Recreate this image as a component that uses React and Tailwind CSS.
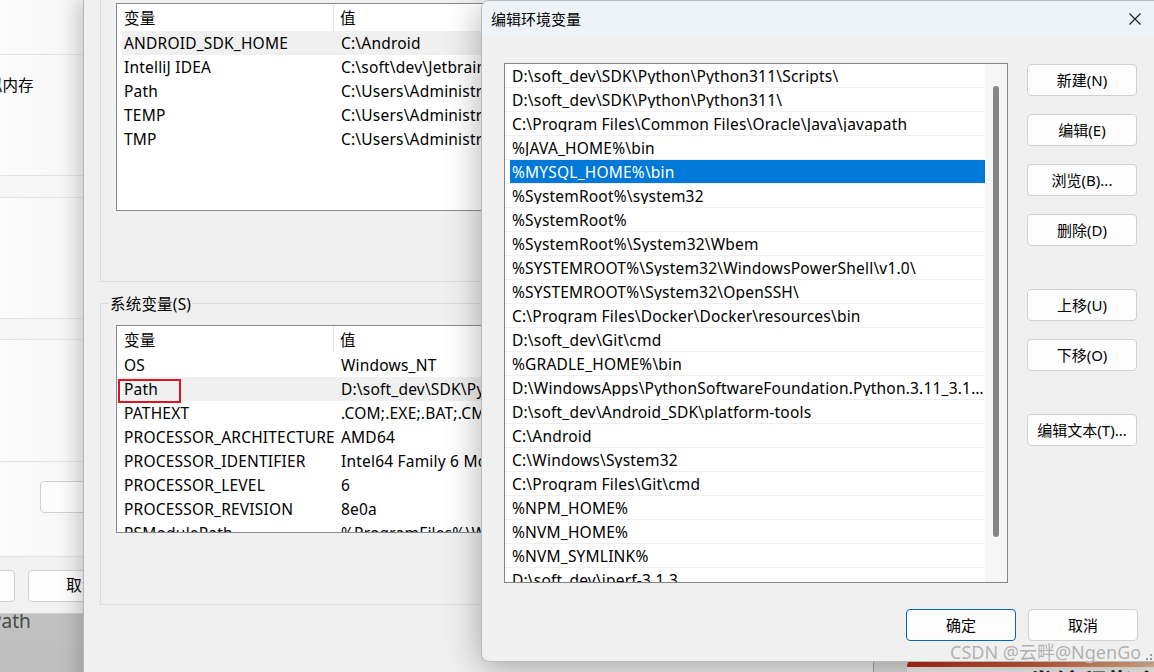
import React from "react";

const userVars = [
  ["ANDROID_SDK_HOME", "C:\\Android"],
  ["IntelliJ IDEA", "C:\\soft\\dev\\Jetbrains\\IntelliJ IDEA 2023.1\\bin;"],
  ["Path", "C:\\Users\\Administrator\\AppData\\Local\\Microsoft\\WindowsApps;"],
  ["TEMP", "C:\\Users\\Administrator\\AppData\\Local\\Temp"],
  ["TMP", "C:\\Users\\Administrator\\AppData\\Local\\Temp"],
];

const sysVars = [
  ["OS", "Windows_NT"],
  ["Path", "D:\\soft_dev\\SDK\\Python\\Python311\\Scripts\\;D:\\soft_dev"],
  ["PATHEXT", ".COM;.EXE;.BAT;.CMD;.VBS;.VBE;.JS;.JSE;.WSF;.WSH;.MSC"],
  ["PROCESSOR_ARCHITECTURE", "AMD64"],
  ["PROCESSOR_IDENTIFIER", "Intel64 Family 6 Model 158 Stepping 10"],
  ["PROCESSOR_LEVEL", "6"],
  ["PROCESSOR_REVISION", "8e0a"],
  ["PSModulePath", "%ProgramFiles%\\WindowsPowerShell\\Modules;"],
];

const pathItems = [
  "D:\\soft_dev\\SDK\\Python\\Python311\\Scripts\\",
  "D:\\soft_dev\\SDK\\Python\\Python311\\",
  "C:\\Program Files\\Common Files\\Oracle\\Java\\javapath",
  "%JAVA_HOME%\\bin",
  "%MYSQL_HOME%\\bin",
  "%SystemRoot%\\system32",
  "%SystemRoot%",
  "%SystemRoot%\\System32\\Wbem",
  "%SYSTEMROOT%\\System32\\WindowsPowerShell\\v1.0\\",
  "%SYSTEMROOT%\\System32\\OpenSSH\\",
  "C:\\Program Files\\Docker\\Docker\\resources\\bin",
  "D:\\soft_dev\\Git\\cmd",
  "%GRADLE_HOME%\\bin",
  "D:\\WindowsApps\\PythonSoftwareFoundation.Python.3.11_3.11.1264.0_x64__qbz5n2kfra8p0",
  "D:\\soft_dev\\Android_SDK\\platform-tools",
  "C:\\Android",
  "C:\\Windows\\System32",
  "C:\\Program Files\\Git\\cmd",
  "%NPM_HOME%",
  "%NVM_HOME%",
  "%NVM_SYMLINK%",
  "D:\\soft_dev\\iperf-3.1.3",
];

function VarTable({ rows, highlight, marked }) {
  return (
    <div className="ml-[15px] h-[208px] w-[700px] border border-[#878b93] bg-white overflow-hidden">
      <div className="flex h-[27px] items-center">
        <div className="h-full w-[217px] pl-[7px] pt-[2px] flex items-center border-r border-[#e5e5e5]">变量</div>
        <div className="pl-[6px] pt-[2px]">值</div>
      </div>
      {rows.map(([k, v], i) => (
        <div
          key={i}
          className={
            "relative ml-[5px] h-[24px] pt-[2px] flex items-center whitespace-nowrap " +
            (i === highlight ? "bg-[#f0f0f0]" : "")
          }
        >
          <div className="w-[219px] pl-[2px] shrink-0">{k}</div>
          <div>{v}</div>
          {i === marked && (
            <div className="absolute left-[-4px] top-[2px] w-[63px] h-[24px] border-2 border-[#e0141e]" />
          )}
        </div>
      ))}
    </div>
  );
}

function Btn({ children, primary, className = "" }) {
  return (
    <div
      className={
        "w-[110px] h-[32px] shrink-0 rounded-[4px] bg-[#fdfdfd] flex items-center justify-center border " +
        (primary ? "border-[#0067c0]" : "border-[#d0d0d0]") +
        " " +
        className
      }
    >
      {children}
    </div>
  );
}

export default function App() {
  return (
    <div className="relative w-[1154px] h-[672px] overflow-hidden bg-gradient-to-b from-[#d9d9d9] to-[#bfbfbf] text-[15.5px] tracking-[0.2px] leading-none text-black font-[family-name:'Segoe_UI','Noto_Sans','Noto_Sans_CJK_SC',sans-serif]">
      {/* background text bottom-left */}
      <div className="absolute left-[-10px] top-[612px] text-[19px] tracking-normal text-[#4a4a4a] leading-none">Path</div>

      {/* left window */}
      <div className="absolute left-0 top-0 w-[110px] h-[614px] bg-gradient-to-r from-[#fbfbfb] to-[#f4f4f4] flex flex-col border-b border-[#cfcfcf]">
        <div className="h-[55px] border-b border-[#e3e3e3]" />
        <div className="h-[121px] border-b border-[#e3e3e3] pt-[23px] whitespace-nowrap">
          <span className="ml-[-29px]">虚拟内存</span>
        </div>
        <div className="h-[22px] border-b border-[#e3e3e3] bg-[#f6f6f6]" />
        <div className="h-[121px] border-b border-[#e3e3e3]" />
        <div className="h-[21px] border-b border-[#e3e3e3] bg-[#f6f6f6]" />
        <div className="h-[122px] border-b border-[#e3e3e3]" />
        <div className="h-[95px] border-b border-[#e3e3e3] pt-[19px]">
          <div className="ml-[40px] w-[100px] h-[32px] rounded-[4px] border border-[#cfcfcf] bg-[#fcfcfc]" />
        </div>
        <div className="flex-1 bg-[#f1f1f1] flex gap-[13px] pt-[13px]">
          <div className="shrink-0 ml-[-85px] w-[100px] h-[32px] rounded-[4px] border border-[#cfcfcf] bg-[#fdfdfd]" />
          <div className="shrink-0 w-[108px] h-[32px] rounded-[4px] border border-[#cfcfcf] bg-[#fdfdfd] flex items-center justify-center">取消</div>
        </div>
      </div>

      {/* middle window: 环境变量 */}
      <div className="absolute left-[83px] top-0 w-[790px] h-[700px] bg-[#f0f0f0] border-l border-[#b5b5b5] shadow-[-6px_0_18px_rgba(0,0,0,0.18)] pl-[16px] flex flex-col">
        <div className="w-[740px] h-[282px] border-x border-b border-[#dcdcdc] pt-[3px]">
          <VarTable rows={userVars} highlight={0} />
        </div>
        <div className="relative mt-[21px] w-[740px] h-[302px] border border-[#dcdcdc] pt-[21px]">
          <div className="absolute left-[8px] top-[-9px] bg-[#f0f0f0] px-[1px] leading-[18px]">系统变量(S)</div>
          <VarTable rows={sysVars} highlight={1} marked={1} />
        </div>
      </div>

      {/* area below dialog on the right */}
      <div className="absolute left-[873px] top-[655px] w-[300px] h-[30px] bg-[#dedede] border-l border-[#a9a9a9]" />
      <div className="absolute left-[907px] top-[660px] w-[260px] h-[20px] rounded-tl-[6px] overflow-hidden flex flex-col">
        <div className="h-[7px] shrink-0 bg-gradient-to-r from-[#b8281c] via-[#d0603a] to-[#efc9a2]" />
        <div className="flex-1 bg-[#f4f1ee] pl-[40px] pt-[3px] text-[26px] font-bold leading-[26px] text-[#222] whitespace-nowrap">Java开发编程指南</div>
      </div>

      {/* dialog 编辑环境变量 */}
      <div className="absolute left-[481px] top-0 w-[690px] h-[662px] rounded-[8px] border border-[#b9b9b9] bg-[#f0f0f0] shadow-[0_6px_36px_rgba(0,0,0,0.32)] overflow-hidden flex flex-col">
        <div className="h-[36px] bg-[#eef3f8] flex items-center justify-between pl-[9px]">
          <div className="leading-none tracking-normal text-[15px]">编辑环境变量</div>
          <div className="w-[46px] h-[36px] mr-[12px] flex items-center justify-center">
            <svg width="12" height="12" viewBox="0 0 12 12">
              <path d="M0.5 0.5 L11.5 11.5 M11.5 0.5 L0.5 11.5" stroke="#1b1b1b" strokeWidth="1.1" />
            </svg>
          </div>
        </div>
        <div className="pl-[22px] pt-[26px] w-[656px] flex flex-col">
          <div className="flex gap-[19px]">
            <div className="w-[504px] h-[520px] border border-[#858585] bg-white flex overflow-hidden">
              <div className="w-[480px] flex flex-col">
                {pathItems.map((p, i) => (
                  <div key={i} className="h-[24px] shrink-0 border-b border-[#efefef]">
                    <div
                      className={
                        "ml-[5px] h-[23px] pl-[2px] pt-[2px] flex items-center whitespace-nowrap overflow-hidden " +
                        (i === 4 ? "bg-[#0078d7] text-white" : "")
                      }
                    >
                      <span className="truncate">{p}</span>
                    </div>
                  </div>
                ))}
              </div>
              <div className="flex-1 bg-[#f6f6f6] pt-[22px] pl-[8px]">
                <div className="w-[6px] h-[451px] rounded-[3px] bg-[#858585]" />
              </div>
            </div>
            <div className="flex flex-col pt-[1px] text-[15px] tracking-normal">
              <Btn>新建(N)</Btn>
              <Btn className="mt-[18px]">编辑(E)</Btn>
              <Btn className="mt-[18px]">浏览(B)...</Btn>
              <Btn className="mt-[18px]">删除(D)</Btn>
              <Btn className="mt-[43px]">上移(U)</Btn>
              <Btn className="mt-[18px]">下移(O)</Btn>
              <Btn className="mt-[43px]">编辑文本(T)...</Btn>
            </div>
          </div>
          <div className="flex justify-end gap-[12px] mt-[26px] text-[15px] tracking-normal">
            <Btn primary>确定</Btn>
            <Btn>取消</Btn>
          </div>
        </div>
      </div>

      {/* watermark */}
      <div className="absolute left-[950px] top-[642px] text-[18px] tracking-normal leading-[20px] text-[#b0b0b0] whitespace-nowrap [text-shadow:0_0_1px_rgba(255,255,255,0.8)]">
        CSDN @云畔@NgenGo
      </div>
      <svg className="absolute left-[1142px] top-[652px]" width="12" height="16" viewBox="0 0 12 16">
        <g fill="#9a9a9a">
          <rect x="8" y="2" width="2" height="2" />
          <rect x="4" y="6" width="2" height="2" />
          <rect x="8" y="6" width="2" height="2" />
          <rect x="0" y="10" width="2" height="2" />
          <rect x="4" y="10" width="2" height="2" />
          <rect x="8" y="10" width="2" height="2" />
        </g>
      </svg>
    </div>
  );
}
